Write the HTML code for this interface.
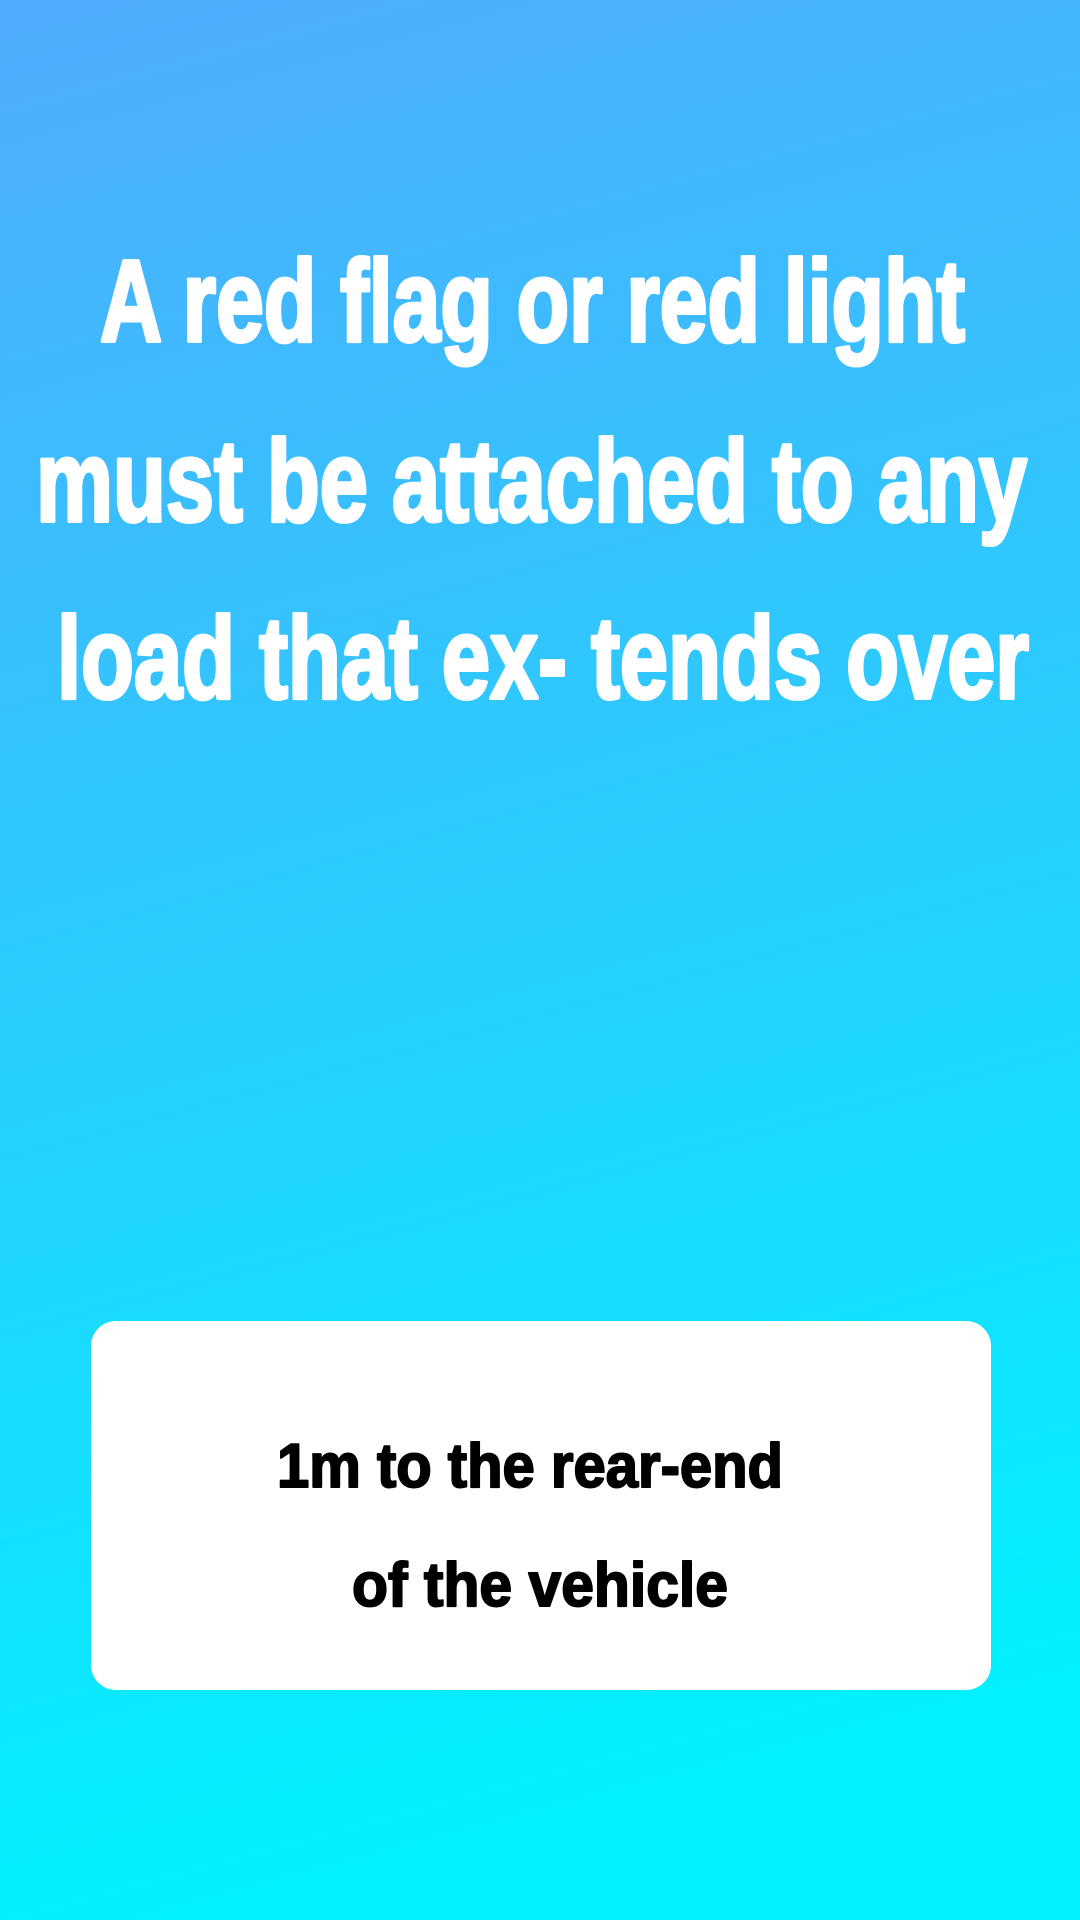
<!DOCTYPE html>
<html><head><meta charset="utf-8"><style>
html,body{margin:0;padding:0;width:1080px;height:1920px;overflow:hidden}
body{background:linear-gradient(165deg,#4facfe 0%,#2ec8fe 40%,#00f2fe 90%,#00f2fe 100%)}
svg{position:absolute;left:0;top:0}
</style></head><body>
<svg width="1080" height="1920" viewBox="0 0 1080 1920" xmlns="http://www.w3.org/2000/svg">
<g font-family="'Liberation Sans', sans-serif" font-weight="bold" fill="#fff" stroke="#fff" stroke-width="4" stroke-linejoin="round" font-size="116">
<text x="100" y="341" textLength="865" lengthAdjust="spacingAndGlyphs">A red flag or red light</text>
<text x="36" y="521" textLength="991" lengthAdjust="spacingAndGlyphs">must be attached to any</text>
<text x="57" y="698" textLength="972" lengthAdjust="spacingAndGlyphs">load that ex- tends over</text>
</g>
<rect x="91" y="1321" width="900" height="369" rx="25" fill="#fff"/>
<g font-family="'Liberation Sans', sans-serif" font-weight="bold" fill="#000" stroke="#000" stroke-width="2" stroke-linejoin="round" font-size="62">
<text x="277" y="1487" textLength="506" lengthAdjust="spacingAndGlyphs">1m to the rear-end</text>
<text x="352" y="1606" textLength="376" lengthAdjust="spacingAndGlyphs">of the vehicle</text>
</g>
</svg>
</body></html>
